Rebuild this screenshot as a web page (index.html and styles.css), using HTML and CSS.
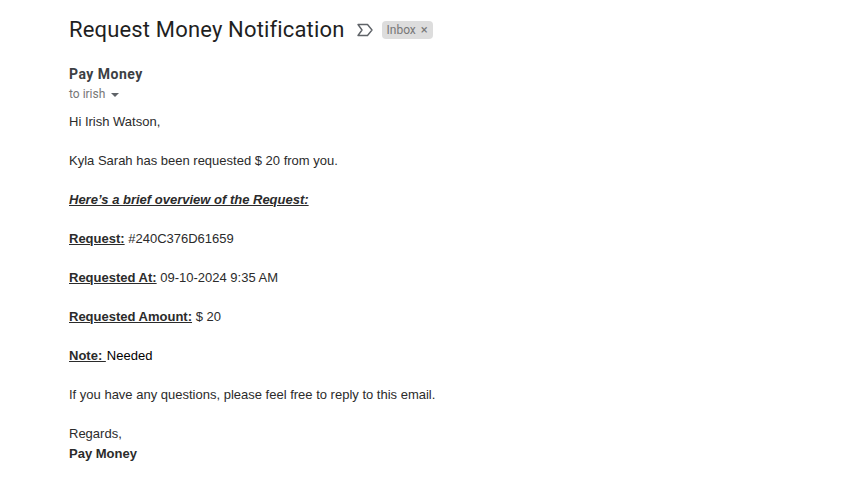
FILE: index.html
```html
<!DOCTYPE html>
<html>

<head>
  <meta charset="utf-8">
  <meta name="viewport" content="width=device-width">
  <title>Request Money Notification</title>
  <link rel="stylesheet" href="styles.css">
</head>

<body>
  <div class="subject-row">
    <h1 class="subject">Request Money Notification</h1>
    <svg class="important" width="16" height="14" viewBox="0 0 16 14">
      <path d="M1 1.5H10.5L15 7L10.5 12.5H1L5 7Z" fill="none" stroke="#5f6368" stroke-width="1.4" stroke-linejoin="round"/>
    </svg>
    <span class="label">Inbox <span class="label-x">×</span></span>
  </div>

  <div class="sender">Pay Money</div>
  <div class="recipient">to irish <span class="caret"></span></div>

  <div class="message">
    <p>Hi Irish Watson,</p>
    <p>Kyla Sarah has been requested $ 20 from you.</p>
    <p><strong><em><u>Here’s a brief overview of the Request:</u></em></strong></p>
    <p><strong><u>Request:</u></strong> #240C376D61659</p>
    <p><strong><u>Requested At:</u></strong> 09-10-2024 9:35 AM</p>
    <p><strong><u>Requested Amount:</u></strong> $ 20</p>
    <p><strong><u>Note:&nbsp;</u></strong><span class="note-value">Needed</span></p>
    <p>If you have any questions, please feel free to reply to this email.</p>
    <p>Regards,<br><strong>Pay Money</strong></p>
  </div>
</body>

</html>
```

FILE: styles.css
```css
body {
  margin: 0;
  padding: 16px 0 0 69px;
  background-color: #ffffff;
  font-family: "Liberation Sans", Arial, sans-serif;
  color: #2b2b2b;
}

.subject-row {
  display: flex;
  align-items: center;
  height: 28px;
}

.subject {
  margin: 0;
  font-family: Roboto, Arial, sans-serif;
  font-size: 22px;
  font-weight: 400;
  line-height: 28px;
  letter-spacing: 0.16px;
  color: #1f1f1f;
}

.important {
  margin-left: 12px;
}

.label {
  margin-left: 9px;
  padding: 0 5px;
  height: 18px;
  line-height: 18px;
  border-radius: 4px;
  background-color: #dddddd;
  font-family: Roboto, Arial, sans-serif;
  font-size: 12px;
  color: #777777;
}

.label-x {
  margin-left: 2px;
  font-size: 13px;
}

.sender {
  margin-top: 20px;
  font-family: Roboto, Arial, sans-serif;
  font-size: 14px;
  font-weight: 700;
  line-height: 20px;
  letter-spacing: 0.5px;
  color: #3c4043;
}

.recipient {
  display: flex;
  align-items: center;
  margin-top: 1px;
  font-family: Roboto, Arial, sans-serif;
  font-size: 12px;
  line-height: 18px;
  color: #777777;
}

.caret {
  margin: 2px 0 0 6px;
  border-top: 4px solid #5f6368;
  border-left: 4px solid transparent;
  border-right: 4px solid transparent;
}

.message {
  margin-top: 9px;
  font-size: 13px;
  line-height: 19.5px;
}

.message p {
  margin: 0 0 19.5px 0;
}

.note-value {
  margin-left: 1px;
  color: #000000;
}
```
